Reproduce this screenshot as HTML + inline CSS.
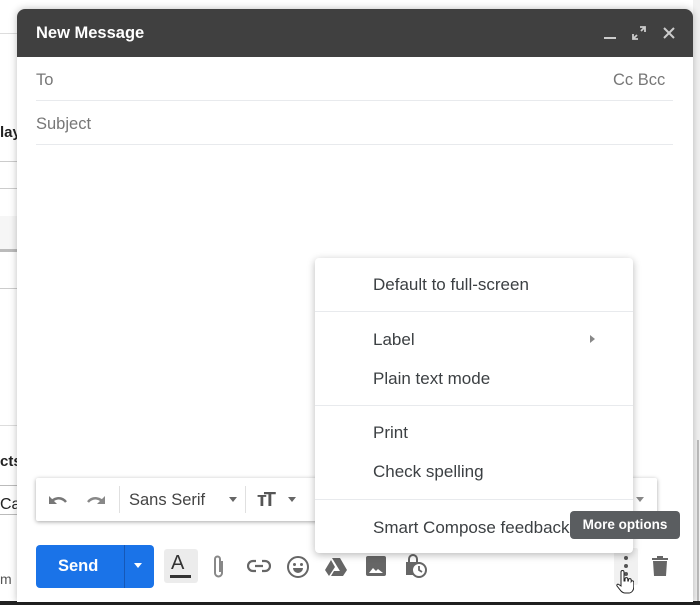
<!DOCTYPE html>
<html><head><style>
*{margin:0;padding:0;box-sizing:border-box}
body{width:700px;height:605px;position:relative;overflow:hidden;background:#fff;font-family:"Liberation Sans",Arial,sans-serif;color:#3c4043}
.a{position:absolute}
.hl{position:absolute;height:1px;background:#e8eaed}
.mi{position:absolute;left:58px;font-size:17px;color:#3c4043}
</style></head><body>
<div class="a" style="left:0;top:33px;width:17px;height:1px;background:#ddd"></div>
<div class="a" style="left:0;top:124px;font-size:15px;font-weight:bold;color:#222">lay</div>
<div class="a" style="left:0;top:161px;width:17px;height:1px;background:#ccc"></div>
<div class="a" style="left:0;top:188px;width:17px;height:1px;background:#ccc"></div>
<div class="a" style="left:0;top:216px;width:17px;height:36px;background:#f6f6f6;border-bottom:3px solid #bbb"></div>
<div class="a" style="left:0;top:288px;width:17px;height:1px;background:#ccc"></div>
<div class="a" style="left:0;top:425px;width:17px;height:1px;background:#ddd"></div>
<div class="a" style="left:0;top:453px;font-size:15px;font-weight:bold;color:#222">cts</div>
<div class="a" style="left:0;top:485px;width:17px;height:1px;background:#bbb"></div>
<div class="a" style="left:0;top:496px;font-size:16px;color:#222">Ca</div>
<div class="a" style="left:0;top:514px;width:17px;height:1px;background:#bbb"></div>
<div class="a" style="left:0;top:571px;font-size:14px;color:#555">m</div>
<div class="a" style="left:693px;top:0;width:7px;height:605px;background:#f1f1f1"></div>
<div class="a" style="left:697px;top:440px;width:2px;height:165px;background:#bbb"></div>
<div class="a" style="left:0;top:601px;width:700px;height:4px;background:#222"></div>

<div class="a" style="left:17px;top:9px;width:676px;height:593px;background:#fff;border-radius:8px 8px 0 0;box-shadow:0 0 8px rgba(0,0,0,.25)"></div>
<div class="a" style="left:17px;top:9px;width:676px;height:48px;background:#404040;border-radius:8px 8px 0 0"></div>
<div class="a" style="left:36px;top:24px;color:#fff;font-weight:bold;font-size:16.5px">New Message</div>
<div class="a" style="left:604px;top:37px;width:12px;height:2px;background:#ccc"></div>
<svg class="a" style="left:632px;top:26px" width="14" height="14" viewBox="0 0 14 14"><path d="M8 1h5v5M13 1L9 5M6 13H1V8M1 13l4-4" stroke="#ccc" stroke-width="1.8" fill="none"/></svg>
<svg class="a" style="left:663px;top:27px" width="12" height="12"><path d="M1 1L11 11M11 1L1 11" stroke="#ccc" stroke-width="2"/></svg>
<div class="a" style="left:36px;top:71px;font-size:16.5px;color:#777">To</div>
<div class="a" style="left:613px;top:71px;font-size:16.5px;color:#777">Cc Bcc</div>
<div class="hl" style="left:36px;top:100px;width:637px"></div>
<div class="a" style="left:36px;top:115px;font-size:16.5px;color:#777">Subject</div>
<div class="hl" style="left:36px;top:144px;width:637px"></div>

<div class="a" style="left:36px;top:478px;width:621px;height:43px;background:#fff;box-shadow:0 1px 4px rgba(0,0,0,.35);border-radius:2px"></div>
<svg class="a" style="left:47px;top:492px" width="22" height="16" viewBox="0 0 22 16"><path d="M4 11C6 6 14 4 19 10" stroke="#777" stroke-width="2.5" fill="none"/><path d="M2 4v8h8z" fill="#777"/></svg>
<svg class="a" style="left:85px;top:492px" width="22" height="16" viewBox="0 0 22 16"><path d="M18 11C16 6 8 4 3 10" stroke="#888" stroke-width="2.5" fill="none"/><path d="M20 4v8h-8z" fill="#888"/></svg>
<div class="a" style="left:119px;top:486px;width:1px;height:27px;background:#e0e0e0"></div>
<div class="a" style="left:129px;top:491px;font-size:16.5px;color:#444">Sans Serif</div>
<div class="a" style="left:229px;top:497px;border:4px solid transparent;border-top:5px solid #666"></div>
<div class="a" style="left:245px;top:486px;width:1px;height:27px;background:#e0e0e0"></div>
<div class="a" style="left:257px;top:489px;font-size:20px;font-weight:bold;color:#555;letter-spacing:-3px">тT</div>
<div class="a" style="left:288px;top:497px;border:4px solid transparent;border-top:5px solid #666"></div>
<div class="a" style="left:636px;top:497px;border:4px solid transparent;border-top:5px solid #888"></div>

<div class="a" style="left:36px;top:545px;width:118px;height:43px;background:#1a73e8;border-radius:4px"></div>
<div class="a" style="left:58px;top:557px;color:#fff;font-weight:bold;font-size:16.5px">Send</div>
<div class="a" style="left:124px;top:545px;width:1px;height:43px;background:#1558b8"></div>
<div class="a" style="left:134px;top:563px;border:4px solid transparent;border-top:5px solid #fff"></div>
<div class="a" style="left:164px;top:549px;width:34px;height:34px;background:#ececec;border-radius:3px"></div>
<div class="a" style="left:171px;top:552px;font-size:20px;color:#333">A</div>
<div class="a" style="left:170px;top:575px;width:21px;height:3px;background:#333"></div>
<svg class="a" style="left:212px;top:554px" width="14" height="26" viewBox="0 0 14 26"><path d="M10 7v12a3.5 3.5 0 0 1-7 0V5a2.5 2.5 0 0 1 5 0v13" stroke="#888" stroke-width="2" fill="none"/></svg>
<svg class="a" style="left:247px;top:558px" width="24" height="16" viewBox="0 0 24 16"><path d="M9 3H6a5 5 0 0 0 0 10h3M15 3h3a5 5 0 0 1 0 10h-3M8 8h8" stroke="#666" stroke-width="2.2" fill="none"/></svg>
<svg class="a" style="left:286px;top:555px" width="24" height="24" viewBox="0 0 24 24"><circle cx="12" cy="12" r="10" stroke="#666" stroke-width="2" fill="none"/><circle cx="8.5" cy="9.5" r="1.5" fill="#666"/><circle cx="15.5" cy="9.5" r="1.5" fill="#666"/><path d="M7 13h10a5 5 0 0 1-10 0z" fill="#666"/></svg>
<svg class="a" style="left:325px;top:557px" width="22" height="20" viewBox="0 0 22 20"><path d="M7 1h8l7 12-4 6zM6 3l4 7-6 9-4-6zM9 14h12l-3 5H6z" fill="#666"/></svg>
<div class="a" style="left:366px;top:556px;width:20px;height:20px;background:#666;border-radius:2px"></div>
<svg class="a" style="left:369px;top:565px" width="14" height="9"><path d="M0 8l4-5 3 3 2-2 5 4z" fill="#fff"/></svg>
<svg class="a" style="left:403px;top:553px" width="26" height="26" viewBox="0 0 26 26"><path d="M5 9h12v13H3V9z" fill="#666"/><path d="M6 9V6a4 4 0 0 1 8 0v3" stroke="#666" stroke-width="2" fill="none"/><circle cx="16" cy="17" r="7" fill="#fff" stroke="#666" stroke-width="2"/><path d="M16 13v4l3 2" stroke="#666" stroke-width="1.8" fill="none"/></svg>
<div class="a" style="left:614px;top:548px;width:24px;height:37px;background:#f1f1f1;border-radius:2px"></div>
<div class="a" style="left:624px;top:556px;width:4px;height:4px;background:#555;border-radius:50%"></div>
<div class="a" style="left:624px;top:564px;width:4px;height:4px;background:#555;border-radius:50%"></div>
<div class="a" style="left:624px;top:572px;width:4px;height:4px;background:#555;border-radius:50%"></div>
<svg class="a" style="left:616px;top:570px" width="18" height="24" viewBox="0 0 18 24"><path d="M5 2a1.5 1.5 0 0 1 3 0v9h1V9a1.4 1.4 0 0 1 2.8 0v2h.6v-1a1.4 1.4 0 0 1 2.8 0v1.5a1.4 1.4 0 0 1 2.6.5v5c0 3-2 6-5 6H9c-2 0-3-1-4-2l-4-5c-.6-1 .6-2.4 1.6-1.6L5 16z" fill="#fff" stroke="#222" stroke-width="1"/></svg>
<svg class="a" style="left:651px;top:555px" width="18" height="22" viewBox="0 0 18 22"><path d="M6 1h6v2h5v2H1V3h5zM2 6h14l-1 15H3z" fill="#666"/></svg>

<div class="a" style="left:315px;top:258px;width:318px;height:295px;background:#fff;border-radius:4px;box-shadow:0 2px 8px rgba(0,0,0,.28)">
<div class="mi" style="top:17px">Default to full-screen</div>
<div class="hl" style="left:0;top:53px;width:318px"></div>
<div class="mi" style="top:72px">Label</div>
<div class="a" style="left:275px;top:77px;border:4px solid transparent;border-left:5px solid #888"></div>
<div class="mi" style="top:111px">Plain text mode</div>
<div class="hl" style="left:0;top:147px;width:318px"></div>
<div class="mi" style="top:165px">Print</div>
<div class="mi" style="top:204px">Check spelling</div>
<div class="hl" style="left:0;top:241px;width:318px"></div>
<div class="mi" style="top:260px">Smart Compose feedback</div>
</div>
<div class="a" style="left:570px;top:511px;width:110px;height:28px;background:#5a5d60;border-radius:4px;color:#fff;font-weight:bold;font-size:13.5px;line-height:28px;text-align:center">More options</div>
</body></html>
